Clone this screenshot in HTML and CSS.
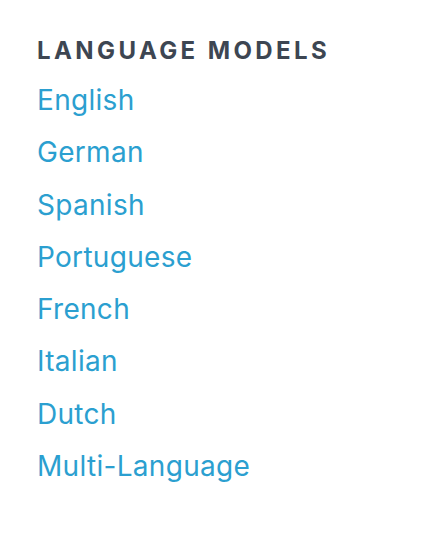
FILE: index.html
```html
<!DOCTYPE html>
<html lang="en">
<head>
<meta charset="utf-8">
<title>Language Models</title>
<link rel="stylesheet" href="styles.css">
</head>
<body>
<nav class="menu">
  <h2 class="menu-title">LANGUAGE MODELS</h2>
  <ul class="menu-list">
    <li><a href="#">English</a></li>
    <li><a href="#">German</a></li>
    <li><a href="#">Spanish</a></li>
    <li><a href="#">Portuguese</a></li>
    <li><a href="#">French</a></li>
    <li><a href="#">Italian</a></li>
    <li><a href="#">Dutch</a></li>
    <li><a href="#">Multi-Language</a></li>
  </ul>
</nav>
</body>
</html>
```
FILE: styles.css
```css
html, body {
  margin: 0;
  padding: 0;
  background: #ffffff;
}
body {
  font-family: Inter, "Noto Sans", sans-serif;
}
.menu {
  padding: 39px 0 0 37px;
}
.menu-title {
  margin: 0 0 11px;
  font-size: 24px;
  font-weight: 700;
  line-height: 24px;
  letter-spacing: 3.4px;
  color: #3d4652;
}
.menu-list {
  list-style: none;
  margin: 0;
  padding: 0;
  display: flex;
  flex-direction: column;
}
.menu-list li {
  font-size: 28px;
  line-height: 52.3px;
  letter-spacing: 0.3px;
}
.menu-list a {
  color: #2b9fd0;
  text-decoration: none;
}
```
